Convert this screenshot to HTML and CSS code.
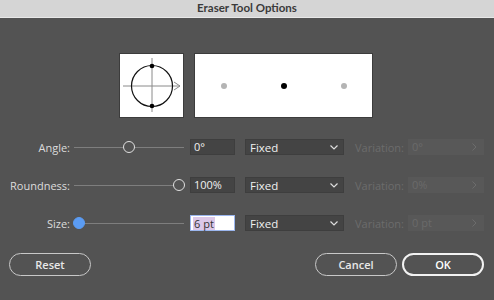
FILE: index.html
```html
<!DOCTYPE html>
<html>
<head>
<meta charset="utf-8">
<link rel="stylesheet" href="styles.css">
</head>
<body>
<div class="window">
  <div class="titlebar">Eraser Tool Options</div>
  <div class="content">
    <div class="preview">
      <div class="box box-small">
        <svg width="63" height="63" viewBox="0 0 63 63">
          <line x1="3" y1="32" x2="60" y2="32" stroke="#8a8a8a" stroke-width="1"/>
          <polyline points="54,28 60,32 54,36" fill="none" stroke="#8a8a8a" stroke-width="1"/>
          <line x1="32" y1="4" x2="32" y2="58" stroke="#8a8a8a" stroke-width="1"/>
          <circle cx="32" cy="32" r="20.5" fill="none" stroke="#111" stroke-width="1.2"/>
          <circle cx="32" cy="12" r="2.3" fill="#000"/>
          <circle cx="32" cy="52" r="2.3" fill="#000"/>
        </svg>
      </div>
      <div class="box box-wide">
        <span class="dot dot-gray"></span>
        <span class="dot dot-black"></span>
        <span class="dot dot-gray"></span>
      </div>
    </div>

    <div class="rows">
      <div class="row">
        <label class="lbl">Angle:</label>
        <div class="slider"><span class="track"></span><span class="thumb" style="left:55px"></span></div>
        <div class="field">0°</div>
        <div class="select"><span>Fixed</span><svg class="chev" width="8" height="5" viewBox="0 0 8 5"><polyline points="0.5,0.5 4,4 7.5,0.5" fill="none" stroke="#ddd" stroke-width="1.2"/></svg></div>
        <label class="lbl lbl-dis">Variation:</label>
        <div class="field field-dis"><span>0°</span><svg width="5" height="8" viewBox="0 0 5 8"><polyline points="0.5,0.5 4,4 0.5,7.5" fill="none" stroke="#6c6c6c" stroke-width="1"/></svg></div>
      </div>
      <div class="row">
        <label class="lbl">Roundness:</label>
        <div class="slider"><span class="track"></span><span class="thumb" style="left:105px"></span></div>
        <div class="field">100%</div>
        <div class="select"><span>Fixed</span><svg class="chev" width="8" height="5" viewBox="0 0 8 5"><polyline points="0.5,0.5 4,4 7.5,0.5" fill="none" stroke="#ddd" stroke-width="1.2"/></svg></div>
        <label class="lbl lbl-dis">Variation:</label>
        <div class="field field-dis"><span>0%</span><svg width="5" height="8" viewBox="0 0 5 8"><polyline points="0.5,0.5 4,4 0.5,7.5" fill="none" stroke="#6c6c6c" stroke-width="1"/></svg></div>
      </div>
      <div class="row">
        <label class="lbl">Size:</label>
        <div class="slider"><span class="track"></span><span class="thumb thumb-blue" style="left:5px"></span></div>
        <div class="field field-active"><span class="sel">6 pt</span></div>
        <div class="select"><span>Fixed</span><svg class="chev" width="8" height="5" viewBox="0 0 8 5"><polyline points="0.5,0.5 4,4 7.5,0.5" fill="none" stroke="#ddd" stroke-width="1.2"/></svg></div>
        <label class="lbl lbl-dis">Variation:</label>
        <div class="field field-dis"><span>0 pt</span><svg width="5" height="8" viewBox="0 0 5 8"><polyline points="0.5,0.5 4,4 0.5,7.5" fill="none" stroke="#6c6c6c" stroke-width="1"/></svg></div>
      </div>
    </div>

    <div class="buttons">
      <button class="btn">Reset</button>
      <div class="right">
        <button class="btn">Cancel</button>
        <button class="btn btn-ok">OK</button>
      </div>
    </div>
  </div>
</div>
</body>
</html>
```

FILE: styles.css
```css
* { box-sizing: border-box; }
html, body { margin: 0; padding: 0; }
body {
  width: 494px;
  height: 300px;
  background: #535353;
  font-family: "Open Sans", "Noto Sans", sans-serif;
  font-size: 11px;
  color: #dcdcdc;
  overflow: hidden;
}
.window { width: 494px; height: 300px; display: flex; flex-direction: column; }
.titlebar {
  height: 18px;
  background: #d5d5d5;
  border-bottom: 1px solid #e8e8e8;
  color: #3a3a3a;
  font-family: Lato, "Open Sans", sans-serif;
  font-weight: 700;
  font-size: 11.5px;
  line-height: 16px;
  text-align: center;
}
.content { padding: 35px 10px 0 9px; }
.preview { display: flex; justify-content: center; gap: 10px; margin-left: -1px; }
.box {
  height: 65px;
  background: #fff;
  border: 1px solid #3c3c3c;
  display: flex;
  align-items: center;
}
.box-small { width: 65px; justify-content: center; }
.box-wide { width: 179px; justify-content: space-between; padding: 0 25px 0 26px; }
.dot { width: 6px; height: 6px; border-radius: 50%; }
.dot-gray { background: #b4b4b4; }
.dot-black { background: #000; }

.rows { display: flex; flex-direction: column; gap: 22px; margin-top: 21px; }
.row { display: flex; align-items: center; height: 16px; margin-left: -9px; }
.lbl { width: 70px; text-align: right; margin-right: 4px; white-space: nowrap; }
.lbl-dis { width: 50px; margin-left: 10px; margin-right: 4px; color: #6c6c6c; }
.slider { position: relative; width: 110px; height: 16px; margin-right: 6px; }
.track { position: absolute; left: 0; right: 0; top: 8px; height: 1px; background: #7e7e7e; }
.thumb {
  position: absolute;
  top: 2px;
  width: 12px;
  height: 12px;
  margin-left: -6px;
  border-radius: 50%;
  border: 1.5px solid #e0e0e0;
  background: #535353;
}
.thumb-blue { background: #5b9cf3; border-color: #5b9cf3; }
.field {
  width: 45px;
  height: 16px;
  background: #444;
  border: 1px solid #3e3e3e;
  color: #f0f0f0;
  padding-left: 3px;
  line-height: 14px;
  display: flex;
  align-items: center;
}
.field-active { background: #fff; border: 1.5px solid #9bb6ee; color: #333; padding-left: 2px; }
.sel { background: #dcc8e8; padding: 0 1px; line-height: 13px; }
.field-dis {
  width: 76px;
  background: #585858;
  border-color: #585858;
  color: #6a6a6a;
  justify-content: space-between;
  padding-right: 6px;
}
.select {
  width: 99px;
  height: 16px;
  margin-left: 10px;
  background: #444;
  border: 1px solid #3e3e3e;
  color: #f0f0f0;
  display: flex;
  align-items: center;
  justify-content: space-between;
  padding: 0 5px 0 4px;
  font-size: 11.5px;
}
.buttons { display: flex; justify-content: space-between; margin-top: 22px; }
.right { display: flex; gap: 5px; }
.btn {
  width: 82px;
  height: 23px;
  border-radius: 12px;
  border: 1px solid #c8c8c8;
  background: #535353;
  color: #e8e8e8;
  font-family: "Open Sans", "Noto Sans", sans-serif;
  font-size: 11px;
  font-weight: 600;
  padding: 0;
}
.btn-ok { border: 2px solid #f2f2f2; color: #fff; }
```
